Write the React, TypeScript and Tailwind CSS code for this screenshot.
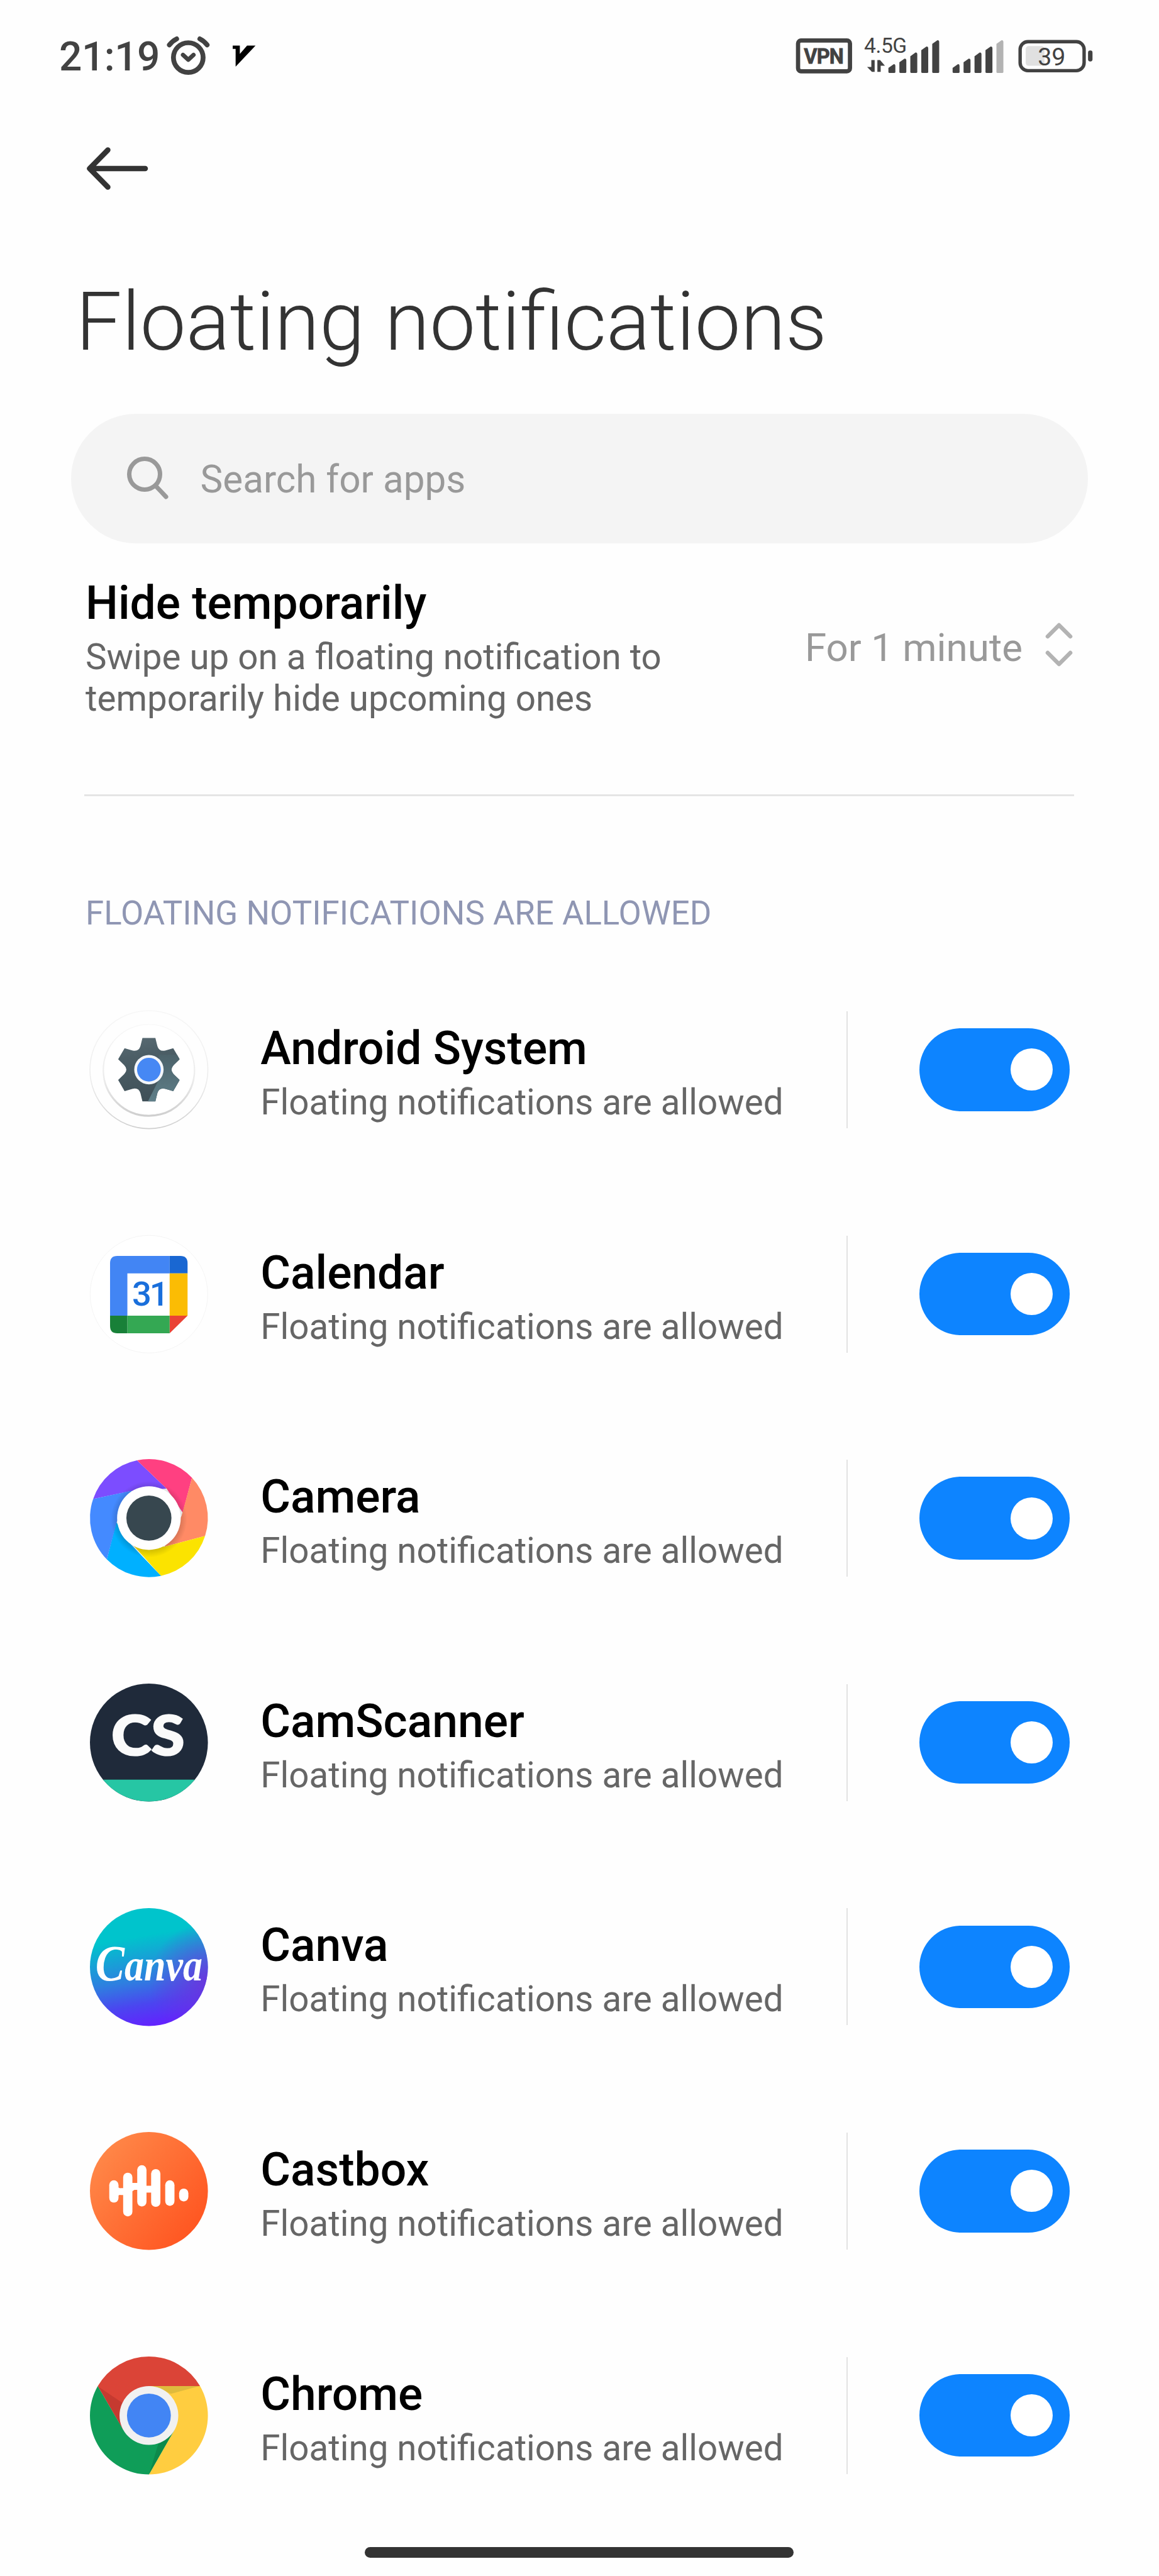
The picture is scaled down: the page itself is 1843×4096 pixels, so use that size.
import type { ReactNode } from "react";

const INK = "#424242";

const VpnIcon = () => (
  <svg className="h-[76.8px] w-[99.84px]" viewBox="1316 54.8 104 80">
    <rect x="1322.3" y="66.7" width="86" height="51" rx="5" fill="none" stroke={INK} strokeWidth="7" />
    <text x="1365" y="104.5" textAnchor="middle" fontSize="34" fontWeight="700" fill={INK} stroke={INK} strokeWidth="0.8" textLength="66">
      VPN
    </text>
  </svg>
);

const SignalBars = ({ x, strength }: { x: number; strength: number }) => (
  <>
    {[106, 96.7, 86.7, 76.7, 66.3].map((top, i) => {
      const left = x + i * 18.15;
      return (
        <path
          key={top}
          d={`M${left} ${top + 6} L${left + 8.5} ${top} Q${left + 11.5} ${top - 0.5} ${left + 11.5} ${top + 3} V118.5 Q${left + 11.5} 120.5 ${left + 9.5} 120.5 H${left + 2} Q${left} 120.5 ${left} 118.5 Z`}
          fill={i < strength ? INK : "#b3b3b3"}
        />
      );
    })}
  </>
);

const MobileSignal = () => (
  <svg className="h-[76.8px] w-[140.16px]" viewBox="1420 54.8 146 80">
    <text x="1431.5" y="87" fontSize="35" fill={INK} textLength="71">
      4.5G
    </text>
    <path d="M1449 99 V118.5 H1444.5 L1436.5 110.5 H1443.5 V99 Z" fill={INK} />
    <path d="M1453.5 118.5 V99 H1458 L1466 108.5 H1459 V118.5 Z" fill={INK} />
    <SignalBars x={1471.8} strength={5} />
  </svg>
);

const SecondSignal = () => (
  <svg className="h-[76.8px] w-[103.68px]" viewBox="1566 54.8 108 80">
    <SignalBars x={1578.3} strength={4} />
  </svg>
);

const BatteryIcon = () => (
  <svg className="h-[76.8px] w-[132.48px]" viewBox="1674 54.8 138 80">
    <rect x="1689.8" y="68.6" width="106" height="48" rx="13" fill="none" stroke={INK} strokeWidth="5.6" />
    <rect x="1699" y="76" width="31" height="32.5" rx="5" fill="#e0e0e0" />
    <text x="1742" y="108" textAnchor="middle" fontSize="41" fill={INK}>
      39
    </text>
    <rect x="1802.3" y="83.3" width="7.4" height="18" rx="3.5" fill={INK} />
  </svg>
);

const AlarmIcon = () => (
  <svg className="h-[76.8px] w-[76.8px]" viewBox="272.3 54.8 80 80" fill="none" stroke={INK} strokeWidth="8" strokeLinecap="round" strokeLinejoin="round">
    <circle cx="312.3" cy="95" r="24.6" />
    <path d="M281 74 Q286 67.500 293 64" />
    <path d="M343.500 74 Q338.500 67.500 331.500 64" />
    <path d="M303.500 90.500 L312.300 98.500 L321 90.500" strokeWidth="7" />
  </svg>
);

const VNotification = () => (
  <svg className="h-[76.8px] w-[67.2px]" viewBox="370 54.800 70 80">
    <path d="M385.700 75 H397.500 V89 L409.500 75 H423.500 L390.500 110 V80.500 H385.700 Z" fill="#000" />
  </svg>
);

const StatusBar = () => (
  <header className="flex h-[182px] items-center pl-[94px] pr-[103.5px]">
    <span className="w-[167.4px] text-[64px] leading-[76px] font-medium tracking-[-0.5px] text-[#424242]">21:19</span>
    <AlarmIcon />
    <div className="w-[17px]" />
    <VNotification />
    <div className="ml-auto flex">
      <VpnIcon />
      <MobileSignal />
      <SecondSignal />
      <BatteryIcon />
    </div>
  </header>
);

// All app logos share a 586 unit circle centred on the origin.
const Logo = ({ children }: { children: ReactNode }) => (
  <svg className="h-[187.6px] w-[187.6px] shrink-0 overflow-visible" viewBox="-293 -293 586 586">
    {children}
  </svg>
);

const gearPath = () => {
  const at = (x: number, y: number, deg: number) => {
    const a = (deg * Math.PI) / 180;
    return `${(x * Math.cos(a) - y * Math.sin(a)).toFixed(1)} ${(x * Math.sin(a) + y * Math.cos(a)).toFixed(1)}`;
  };
  const teeth = [0, 60, 120, 180, 240, 300].map(
    (d) =>
      `${at(-32, -158, d)} L${at(32, -158, d)} L${at(42, -117, d)} Q${at(51, -88, d)} ${at(80.5, -95, d)}`
  );
  return `M${teeth.join(" L")} Z`;
};

const AndroidSystemLogo = () => (
  <Logo>
    <defs>
      <linearGradient id="rim" x1="0" y1="0" x2="0" y2="1">
        <stop offset="0" stopColor="#f7f7f7" />
        <stop offset="0.6" stopColor="#ececec" />
        <stop offset="1" stopColor="#cfcfcf" />
      </linearGradient>
      <linearGradient id="gear" x1="0" y1="0" x2="0.2" y2="1">
        <stop offset="0" stopColor="#5c6e76" />
        <stop offset="0.35" stopColor="#4c5e66" />
        <stop offset="1" stopColor="#3f5058" />
      </linearGradient>
      <linearGradient id="gearLight" x1="0" y1="0" x2="0" y2="1">
        <stop offset="0" stopColor="#4c626a" />
        <stop offset="1" stopColor="#5f7f89" />
      </linearGradient>
      <clipPath id="gearClip">
        <path d={gearPath()} />
      </clipPath>
    </defs>
    <circle r="293" fill="none" stroke="url(#rim)" strokeWidth="5" />
    <circle cy="4" r="225" fill="none" stroke="url(#rim)" strokeWidth="10" />
    <circle r="223" fill="#fff" />
    <g clipPath="url(#gearClip)">
      <rect x="-170" y="-170" width="340" height="340" fill="url(#gear)" />
      <path d="M-6 160 L44 60 L50 -74 H160 V160 Z" fill="url(#gearLight)" />
    </g>
    <circle r="73" fill="#f4f6fa" />
    <circle r="59" fill="#4688f4" />
  </Logo>
);

const CalendarLogo = () => (
  <Logo>
    <circle r="292" fill="#fff" stroke="#f3f3f3" strokeWidth="3" />
    <path d="M-193 107 V-154 Q-193 -190 -157 -190 H103 V-103 H-107 V107 Z" fill="#4285f4" />
    <path d="M103 -190 H156 Q192 -190 192 -154 V-103 H103 Z" fill="#1967d2" />
    <path d="M103 -103 H192 V107 H103 Z" fill="#fbbc04" />
    <path d="M103 107 H192 L103 194 Z" fill="#ea4335" />
    <path d="M-107 107 H103 V194 H-107 Z" fill="#34a853" />
    <path d="M-193 107 H-107 V194 H-157 Q-193 194 -193 158 Z" fill="#188038" />
    <text x="-84" y="56" fontSize="170" className="font-medium" fill="#1a6fdb" letterSpacing="-10">
      31
    </text>
  </Logo>
);

const CameraLogo = () => (
  <Logo>
    <defs>
      <radialGradient id="lensShade" cx="0" cy="6" r="190" gradientUnits="userSpaceOnUse">
        <stop offset="0.8" stopColor="#000" stopOpacity="0.16" />
        <stop offset="1" stopColor="#000" stopOpacity="0" />
      </radialGradient>
    </defs>
    <path d="M-277 -95 L-92 -134 L88 -146 L-59 -287 A293 293 0 0 0 -277 -95 Z" fill="#7c4dff" />
    <path d="M-59 -287 L88 -146 L168 -27 L214 -200 A293 293 0 0 0 -59 -287 Z" fill="#ff4081" />
    <path d="M214 -200 L162 -10 L78 142 L279 89 A293 293 0 0 0 214 -200 Z" fill="#ff8a65" />
    <path d="M279 89 L78 142 L-77 136 L60 287 A293 293 0 0 0 279 89 Z" fill="#fbe300" />
    <path d="M60 287 L-90 130 L-162 20 L-209 205 A293 293 0 0 0 60 287 Z" fill="#00b0ff" />
    <path d="M-209 205 L-160 20 L-85 -136 L-277 -95 A293 293 0 0 0 -209 205 Z" fill="#448aff" />
    <circle cy="6" r="190" fill="url(#lensShade)" />
    <circle r="158" fill="#fff" />
    <circle r="112" fill="#37474f" />
  </Logo>
);

const CamScannerLogo = () => (
  <Logo>
    <circle r="293" fill="#1f2a3a" />
    <path d="M-228 184 H228 A293 293 0 0 1 -228 184 Z" fill="#26c6a4" />
    <text
      x="-187"
      y="64"
      fontSize="276"
      className="font-[Lato] font-black"
      fill="#fafafa"
      stroke="#fafafa"
      strokeWidth="7"
      textLength="364"
      lengthAdjust="spacingAndGlyphs"
    >
      CS
    </text>
  </Logo>
);

const CanvaLogo = () => (
  <Logo>
    <defs>
      <linearGradient id="canvaBase" x1="0.42" y1="0.1" x2="0.58" y2="1">
        <stop offset="0.15" stopColor="#00c4cc" />
        <stop offset="0.55" stopColor="#2e7fe0" />
        <stop offset="0.78" stopColor="#4b45f0" />
        <stop offset="1" stopColor="#6420ff" />
      </linearGradient>
      <radialGradient id="canvaEdge" cx="1" cy="0.62" r="0.5">
        <stop offset="0" stopColor="#7030dc" stopOpacity="0.85" />
        <stop offset="1" stopColor="#7030dc" stopOpacity="0" />
      </radialGradient>
    </defs>
    <circle r="293" fill="url(#canvaBase)" />
    <circle r="293" fill="url(#canvaEdge)" />
    <text
      x="-266"
      y="66"
      fontSize="222"
      fill="#fff"
      className="font-['Liberation_Serif'] font-bold italic"
      textLength="532"
      lengthAdjust="spacingAndGlyphs"
    >
      <tspan fontSize="248">C</tspan>anva
    </text>
  </Logo>
);

const CastboxLogo = () => (
  <Logo>
    <defs>
      <linearGradient id="castbox" x1="0.1" y1="0.15" x2="0.9" y2="0.8">
        <stop offset="0" stopColor="#ff8748" />
        <stop offset="1" stopColor="#ff5722" />
      </linearGradient>
    </defs>
    <circle r="293" fill="url(#castbox)" />
    <g fill="#fff">
      <rect x="-197" y="-53" width="46" height="111" rx="23" />
      <rect x="-128" y="-91" width="46" height="217" rx="23" />
      <rect x="-58" y="-128" width="46" height="205" rx="23" />
      <rect x="11" y="-109" width="46" height="188" rx="23" />
      <rect x="81" y="-53" width="46" height="127" rx="23" />
      <rect x="150" y="-12" width="46" height="64" rx="23" />
      <path d="M-160 -24 Q-151 -12 -140 -14 H-120 V20 H-140 Q-151 18 -160 32 Z" />
      <path d="M-90 -40 H-50 V-6 H-72 L-90 6 Z" />
      <path d="M-20 -26 H20 V8 H-20 Z" />
    </g>
  </Logo>
);

const ChromeLogo = () => (
  <Logo>
    <path d="M-254 -146 A293 293 0 0 1 254 -146 L0 -146 L0 0 L-126 73 Z" fill="#db4437" />
    <path d="M254 -146 A293 293 0 0 1 0 293 L126 73 L0 0 V-146 Z" fill="#ffcd40" />
    <path d="M-254 -146 A293 293 0 0 0 0 293 L126 73 L0 0 L-126 73 Z" fill="#0f9d58" />
    <path d="M20 -146 H251 L110 -108 Z" fill="#dfbb3d" />
    <path d="M-252 -144 L-128 -60 L-130 66 Z" fill="#c53a30" />
    <path d="M118 86 L1 291 L50 130 Z" fill="#0d8a4b" />
    <circle r="146" fill="#f1f1f1" />
    <circle r="109" fill="#4285f4" />
  </Logo>
);

const apps = [
  { name: "Android System", logo: <AndroidSystemLogo /> },
  { name: "Calendar", logo: <CalendarLogo /> },
  { name: "Camera", logo: <CameraLogo /> },
  { name: "CamScanner", logo: <CamScannerLogo /> },
  { name: "Canva", logo: <CanvaLogo /> },
  { name: "Castbox", logo: <CastboxLogo /> },
  { name: "Chrome", logo: <ChromeLogo /> },
];

const AppRow = ({ name, logo }: { name: string; logo: ReactNode }) => (
  <li className="flex h-[356.6px] items-center pl-[143.2px] pr-[141.6px]">
    {logo}
    <div className="ml-[83.5px] flex-1 pt-[18px]">
      <h3 className="text-[73.200px] leading-[86px] font-medium text-black">{name}</h3>
      <p className="text-[56.500px] leading-[86px] text-[#666]">Floating notifications are allowed</p>
    </div>
    <div className="mr-[114px] h-[186px] w-[2px] bg-[#e2e2e2]" />
    <button className="flex h-[131.4px] w-[239px] items-center justify-end rounded-full bg-[#0d84ff] pr-[27.5px]">
      <span className="h-[67px] w-[67px] rounded-full bg-white" />
    </button>
  </li>
);

export default function App() {
  return (
    <div className="flex h-[4096px] w-[1843px] flex-col overflow-hidden bg-[#fefefe] font-[Roboto,sans-serif]">
      <StatusBar />

      <div className="flex h-[172px] items-center pl-[134px]">
        <svg className="h-[72px] w-[106px]" viewBox="0 0 106 72" fill="none" stroke="#333" strokeWidth="8.5" strokeLinecap="round" strokeLinejoin="round">
          <path d="M97 36 H9 M37.500 6.500 L8.500 36 L37.500 65.500" />
        </svg>
      </div>

      <h1 className="mt-[83px] pl-[120.5px] text-[130px] leading-[150px] font-light text-[#333]">Floating notifications</h1>

      <div className="mt-[70.5px] ml-[113px] flex h-[206px] w-[1617px] items-center rounded-full bg-[#f4f4f4] pl-[86px]">
        <svg className="h-[76px] w-[76px]" viewBox="0 0 76 76" fill="none" stroke="#999" strokeWidth="7" strokeLinecap="round">
          <circle cx="31" cy="31" r="24.500" />
          <path d="M49 50 L65 67" />
        </svg>
        <span className="ml-[43.5px] pt-[5px] text-[60.200px] leading-[72px] text-[#999]">Search for apps</span>
      </div>

      <section className="mt-[51px] flex items-center justify-between pl-[136px] pr-[133px]">
        <div>
          <h2 className="text-[73.200px] leading-[88px] font-medium text-black">Hide temporarily</h2>
          <p className="mt-[9px] text-[56.500px] leading-[66.6px] text-[#666]">
            Swipe up on a floating notification to
            <br />
            temporarily hide upcoming ones
          </p>
        </div>
        <div className="flex items-center">
          <span className="text-[61.900px] leading-[72px] text-[#999]">For 1 minute</span>
          <svg className="mb-[10px] ml-[32px] h-[80px] w-[52px]" viewBox="0 0 52 80" fill="none" stroke="#b3b3b3" strokeWidth="6.500" strokeLinecap="round" strokeLinejoin="round">
            <path d="M8 27 L26 9 L44 27 M8 53 L26 71 L44 53" />
          </svg>
        </div>
      </section>

      <hr className="mt-[118.5px] mr-[135px] ml-[134px] h-[3px] border-0 bg-[#e5e5e5]" />

      <h2 className="mt-[155.5px] pl-[136px] text-[52.800px] leading-[60px] text-[#8f96b3]">FLOATING NOTIFICATIONS ARE ALLOWED</h2>

      <ul className="mt-[41px]">
        {apps.map((app) => (
          <AppRow key={app.name} name={app.name} logo={app.logo} />
        ))}
      </ul>

      <div className="mt-[31px] ml-[579.5px] h-[17px] w-[682px] rounded-full bg-[#333]" />
    </div>
  );
}
